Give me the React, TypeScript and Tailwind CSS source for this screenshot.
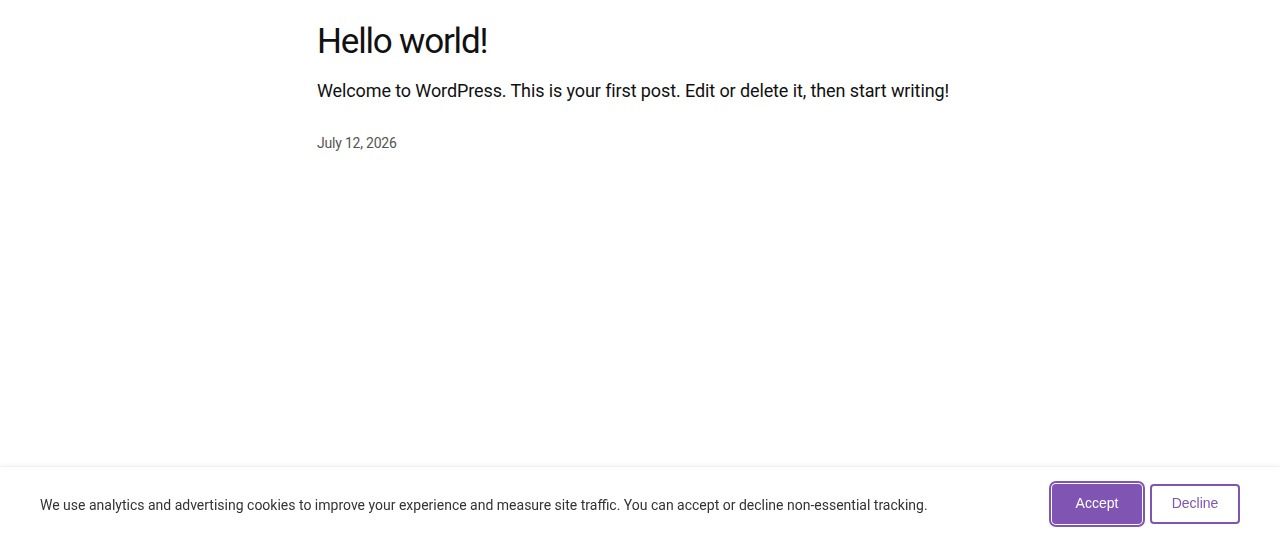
import { useState } from 'react';

export default function App() {
  const [consent, setConsent] = useState<'none' | 'accepted' | 'declined'>('none');

  return (
    <div className="min-h-screen bg-white font-['Roboto',sans-serif] text-[#111]">
      {/* Post */}
      <main className="w-[646px] mx-auto pt-[21px]">
        <h1 className="text-[35px] leading-[42px] tracking-[-0.034em] font-normal">Hello world!</h1>
        <p className="mt-[14px] text-[18px] leading-[28px] tracking-[-0.006em]">
          Welcome to WordPress. This is your first post. Edit or delete it, then start writing!
        </p>
        <p className="mt-[28px] text-[14px] leading-[20px] tracking-[-0.015em] text-[#555]">July 12, 2026</p>
      </main>

      {/* Cookie banner */}
      {consent === 'none' && (
        <div className="fixed inset-x-0 bottom-0 h-[74px] bg-white border-t border-[#f0f0f0] shadow-[0_-2px_4px_rgba(0,0,0,0.03)] flex items-center justify-between px-[40px]">
          <p className="text-[14px] leading-[20px] text-[#333] pt-[2px]">
            We use analytics and advertising cookies to improve your experience and measure site traffic. You can accept or decline non-essential tracking.
          </p>
          <div className="flex gap-[8px] font-['Liberation_Sans',Arial,sans-serif] text-[14px]">
            <button
              onClick={() => setConsent('accepted')}
              className="w-[90px] h-[40px] rounded-[4px] bg-[#7f54b3] text-white ring-2 ring-[#7f54b3] ring-offset-1 ring-offset-white"
            >
              Accept
            </button>
            <button
              onClick={() => setConsent('declined')}
              className="w-[90px] h-[40px] rounded-[4px] border-2 border-[#7f54b3] text-[#7f54b3] bg-white"
            >
              Decline
            </button>
          </div>
        </div>
      )}
    </div>
  );
}
